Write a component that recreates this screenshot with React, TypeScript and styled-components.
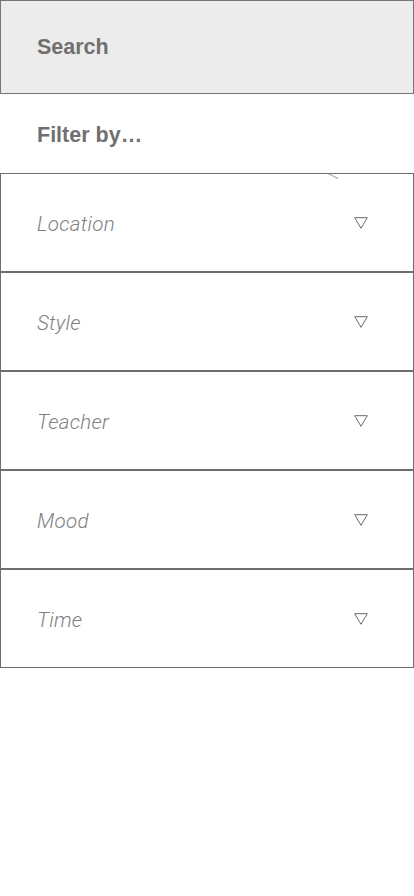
import React from "react";
import styled, { createGlobalStyle } from "styled-components";

const Global = createGlobalStyle`
  html, body { margin: 0; padding: 0; background: #ffffff; }
  body { font-family: "Liberation Sans", Arial, sans-serif; }
  * { box-sizing: border-box; }
`;

const Page = styled.div`
  width: 414px;
  display: flex;
  flex-direction: column;
`;

const SearchBar = styled.div`
  height: 94px;
  background: #ececec;
  border: 1px solid #777777;
  display: flex;
  align-items: center;
  padding: 1px 0 0 36px;
  font-size: 21.5px;
  font-weight: 700;
  color: #707070;
`;

const FilterLabel = styled.div`
  height: 79px;
  display: flex;
  align-items: center;
  padding: 4px 0 0 37px;
  font-size: 21.5px;
  font-weight: 700;
  color: #707070;
`;

const List = styled.div`
  display: flex;
  flex-direction: column;
`;

const Row = styled.div`
  position: relative;
  height: 99px;
  border: 1px solid #6e6e6e;
  display: flex;
  align-items: center;
  justify-content: space-between;
  padding: 0 45px 0 36px;
`;

const RowLabel = styled.span`
  padding-top: 3px;
  font-family: Roboto, "Liberation Sans", Arial, sans-serif;
  font-size: 20.5px;
  letter-spacing: 0.3px;
  font-style: italic;
  font-weight: 300;
  color: #808080;
`;

const Caret = styled.svg`
  width: 14px;
  height: 12px;
  display: block;
`;

const Stray = styled.svg`
  position: absolute;
  left: 326px;
  top: -1px;
  width: 12px;
  height: 7px;
`;

const items = ["Location", "Style", "Teacher", "Mood", "Time"];

export default function App() {
  return (
    <Page>
      <Global />
      <SearchBar>Search</SearchBar>
      <FilterLabel>Filter by…</FilterLabel>
      <List>
        {items.map((label, i) => (
          <Row key={label}>
            {i === 0 && (
              <Stray viewBox="0 0 12 7">
                <line x1="1" y1="0.5" x2="11" y2="5.5" stroke="#777" strokeWidth="0.8" />
              </Stray>
            )}
            <RowLabel>{label}</RowLabel>
            <Caret viewBox="0 0 14 12">
              <path d="M0.7 0.7 H13.3 L7 11.3 Z" fill="none" stroke="#6a6a6a" strokeWidth="1" strokeLinejoin="miter" />
            </Caret>
          </Row>
        ))}
      </List>
    </Page>
  );
}
